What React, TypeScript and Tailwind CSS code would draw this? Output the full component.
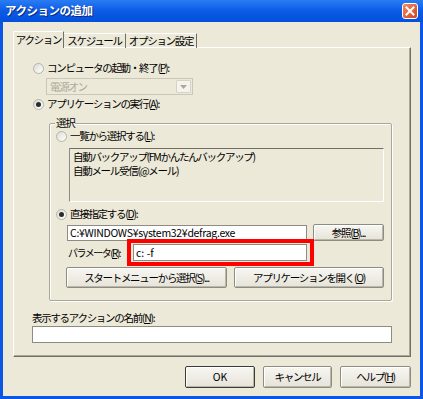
import React from "react";

function Radio({ checked }: { checked?: boolean }) {
  return (
    <span className="flex h-[11px] w-[11px] shrink-0 items-center justify-center rounded-full border border-[#b4b3ab] bg-gradient-to-br from-[#dcdcd4] to-white">
      {checked && <span className="h-[5px] w-[5px] rounded-full bg-[#2b2b2b]" />}
    </span>
  );
}

function Btn({ children, className = "", def }: { children: React.ReactNode; className?: string; def?: boolean }) {
  return (
    <div
      className={`flex items-center justify-center rounded-[2px] border bg-gradient-to-b from-[#f7f6f2] to-[#e6e3d8] shadow-[inset_1px_1px_0_#fff,inset_-1px_-1px_0_#b9b6aa] ${
        def ? "border-[#3b3b38]" : "border-[#8e8c82]"
      } ${className}`}
    >
      {children}
    </div>
  );
}

const txt = "text-[10.5px] leading-[14px] tracking-[-1.3px]";

export default function App() {
  return (
    <div className="flex h-[399px] w-[423px] flex-col bg-[#0b56e4] font-['Noto_Sans_CJK_JP',sans-serif] text-black">
      {/* title bar */}
      <div className="flex h-[22px] items-center justify-between bg-gradient-to-b from-[#2a7cf2] via-[#0a5be6] to-[#0450dd] pl-[5px] pr-[5px]">
        <span className="text-[11.5px] font-bold tracking-[-0.5px] text-white [text-shadow:1px_1px_0_#0a2a7a]">
          アクションの追加
        </span>
        <div className="flex h-[16px] w-[16px] items-center justify-center rounded-[3px] border border-white bg-gradient-to-br from-[#f08a63] to-[#d2401a]">
          <svg width="10" height="10" viewBox="0 0 10 10">
            <path d="M1.5 1.5L8.5 8.5M8.5 1.5L1.5 8.5" stroke="white" strokeWidth="2" strokeLinecap="square" />
          </svg>
        </div>
      </div>

      {/* body */}
      <div className="mx-[3px] mb-[3px] flex flex-1 flex-col bg-[#ece9d8] pl-[10px] pr-[9px] pt-[9px]">
        {/* tabs */}
        <div className="relative z-10 -mb-px flex h-[17px] items-end">
          <div className={`${txt} flex h-[17px] w-[51px] items-center justify-center border-l border-r border-t border-l-white border-r-[#716f64] border-t-white bg-[#ece9d8]`}>
            アクション
          </div>
          <div className={`${txt} flex h-[15px] w-[62px] items-center justify-center border-r border-t border-r-[#716f64] border-t-white`}>
            スケジュール
          </div>
          <div className={`${txt} flex h-[15px] w-[71px] items-center justify-center border-r border-t border-r-[#716f64] border-t-white`}>
            オプション設定
          </div>
        </div>

        {/* tab panel */}
        <div className="flex h-[310px] w-[398px] flex-col border border-b-[#716f64] border-l-white border-r-[#716f64] border-t-white pl-[19px] pt-[13px] shadow-[inset_-1px_-1px_0_#aca899]">
          <div className="flex h-[14px] items-center gap-[2px]">
            <Radio />
            <span className={`${txt} ml-[1px]`}>
              コンピュータの起動・終了(<u>P</u>):
            </span>
          </div>
          <div className="ml-[13px] mt-[3px] flex h-[17px] w-[147px] items-center justify-between border border-[#c9c7ba] bg-[#ece9d8] pl-[3px] pr-[1px]">
            <span className={`${txt} text-[#aca899]`}>電源オン</span>
            <span className="flex h-[13px] w-[15px] items-center justify-center rounded-[1px] border border-[#d5d3c7] bg-[#f4f3ee]">
              <svg width="7" height="4" viewBox="0 0 7 4">
                <path d="M0 0H7L3.5 4Z" fill="#aca899" />
              </svg>
            </span>
          </div>
          <div className="mt-[2px] flex h-[14px] items-center gap-[2px]">
            <Radio checked />
            <span className={`${txt} ml-[1px]`}>
              アプリケーションの実行(<u>A</u>):
            </span>
          </div>

          {/* group box */}
          <div className="relative ml-[16px] mt-[12px] flex h-[178px] w-[343px] flex-col rounded-[2px] border border-[#a9a799] pl-[6px] pt-[5px] shadow-[inset_1px_1px_0_#fff,1px_1px_0_#fff]">
            <span className={`${txt} absolute -top-[8px] left-[5px] bg-[#ece9d8] px-[1px]`}>選択</span>
            <div className="flex h-[14px] items-center gap-[2px]">
              <Radio />
              <span className={`${txt} ml-[1px]`}>
                一覧から選択する(<u>L</u>):
              </span>
            </div>
            <div className="ml-[13px] mt-[5px] flex h-[54px] w-[315px] flex-col border border-b-white border-l-[#8e8c82] border-r-white border-t-[#716f64] pl-[3px] pt-[1px]">
              <span className={`${txt} leading-[12px]`}>自動バックアップ(FMかんたんバックアップ)</span>
              <span className={`${txt} leading-[12px]`}>自動メール受信(@メール)</span>
            </div>
            <div className="mt-[5px] flex h-[14px] items-center gap-[2px]">
              <Radio checked />
              <span className={`${txt} ml-[1px]`}>
                直接指定する(<u>D</u>):
              </span>
            </div>
            <div className="ml-[11px] mt-[3px] flex items-center gap-[6px]">
              <div className="flex h-[16px] w-[240px] items-center border border-[#8e8c82] bg-white pl-[2px]">
                <span className="text-[10.5px] leading-[14px] tracking-[-0.3px]">C:¥WINDOWS¥system32¥defrag.exe</span>
              </div>
              <Btn className="h-[17px] w-[71px]">
                <span className={txt}>
                  参照(<u>B</u>)...
                </span>
              </Btn>
            </div>
            <div className="relative ml-[12px] mt-[3px] flex h-[17px] items-center">
              <span className="w-[65px] text-[10px] leading-[14px] tracking-[-1.5px]">
                パラメータ(<u>R</u>):
              </span>
              <div className="flex h-[17px] w-[174px] items-center border border-[#8e8c82] bg-white pl-[2px]">
                <span className="text-[10.5px] leading-[14px]">c: -f</span>
              </div>
              <div className="absolute -top-[5px] left-[59px] h-[27px] w-[187px] border-[4px] border-[#ff0000]" />
            </div>
            <div className="ml-[10px] mt-[6px] flex gap-[7px]">
              <Btn className="h-[21px] w-[161px]">
                <span className={txt}>
                  スタートメニューから選択(<u>S</u>)...
                </span>
              </Btn>
              <Btn className="h-[21px] w-[150px]">
                <span className={txt}>
                  アプリケーションを開く(<u>O</u>)
                </span>
              </Btn>
            </div>
          </div>

          <div className="-ml-[1px] mt-[10px] flex h-[14px] items-center">
            <span className={txt}>
              表示するアクションの名前(<u>N</u>):
            </span>
          </div>
          <div className="-ml-[1px] mt-[1px] h-[17px] w-[360px] border border-[#8e8c82] bg-white" />
        </div>

        {/* dialog buttons */}
        <div className="mt-[9px] flex justify-end gap-[8px]">
          <Btn def className="h-[22px] w-[70px]">
            <span className="text-[10.5px] leading-[14px]">OK</span>
          </Btn>
          <Btn className="h-[22px] w-[69px]">
            <span className={txt}>キャンセル</span>
          </Btn>
          <Btn className="h-[22px] w-[71px]">
            <span className={txt}>
              ヘルプ(<u>H</u>)
            </span>
          </Btn>
        </div>
      </div>
    </div>
  );
}
